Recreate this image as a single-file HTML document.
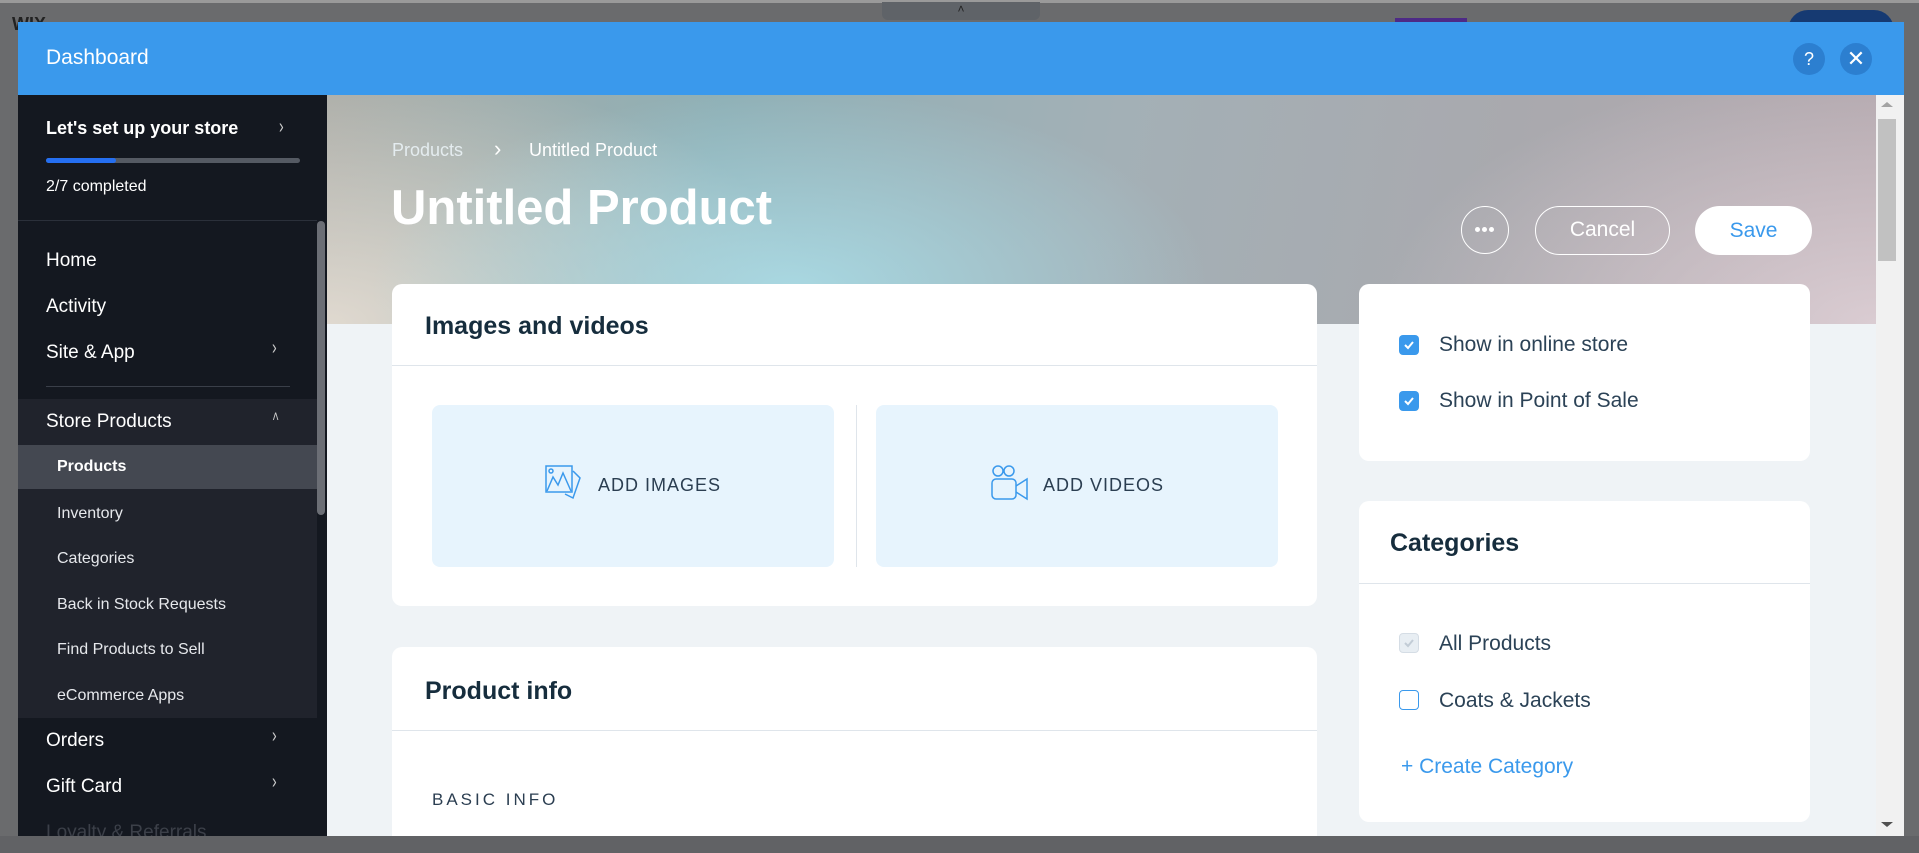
<!DOCTYPE html>
<html><head><meta charset="utf-8">
<style>
*{box-sizing:border-box;margin:0;padding:0}
html,body{width:1919px;height:853px;overflow:hidden}
body{background:#6a6b6d;font-family:"Liberation Sans",sans-serif;position:relative}
.abs{position:absolute}
.modal{left:18px;top:22px;width:1886px;height:814px;background:#eff3f6;overflow:hidden}
.hdr{left:0;top:0;width:1886px;height:73px;background:#3a99ec}
.hdr .t{left:28px;top:24px;color:#fff;font-size:21px}
.circ{width:32px;height:32px;border-radius:50%;background:#2c7fd0;color:#fff;text-align:center;line-height:32px;font-size:18px}
.side{left:0;top:73px;width:309px;height:741px;background:#141820;color:#fff;overflow:hidden}
.side .i{position:absolute;left:28px;font-size:19px;color:#fff}
.side .s{position:absolute;left:39px;font-size:16px;color:#e6e8ec}
.chev{position:absolute;left:253px;color:#ccc;font-size:20px;font-weight:100;transform:scaleX(.7)}
.hero{left:309px;top:73px;width:1549px;height:229px;background:
radial-gradient(ellipse 420px 200px at 30% 85%,rgba(170,218,228,.95),rgba(170,218,228,0)),
radial-gradient(ellipse 500px 260px at 0% 100%,rgba(230,222,212,.9),rgba(230,222,212,0)),
radial-gradient(ellipse 500px 260px at 100% 100%,rgba(222,208,214,.9),rgba(222,208,214,0)),
linear-gradient(100deg,#a9aba6 0%,#8fb0b6 25%,#a3b0b6 50%,#a9a9ae 75%,#b4a8ae 100%)}
.card{background:#fff;border-radius:10px;position:absolute}
.ht{position:absolute;font-size:25px;color:#162d3d;font-weight:bold}
.div{position:absolute;height:1px;background:#dfe5eb}
.box{position:absolute;background:#e7f4fd;border-radius:8px;color:#2b3e51;font-size:18px;letter-spacing:1px}
.cb{position:absolute;width:20px;height:20px;border-radius:4px;background:#3a99ec}
.lbl{position:absolute;font-size:21px;color:#2b4256}
</style></head><body>
<div class="abs" style="left:0;top:0;width:1919px;height:3px;background:#9a9a9a"></div>
<div class="abs" style="left:882px;top:2px;width:158px;height:18px;background:#5f6368;border-radius:0 0 6px 6px;color:#222;font-size:12px;text-align:center">˄</div>
<div class="abs" style="left:12px;top:14px;color:#222;font-size:18px;font-weight:bold">WIX</div>
<div class="abs" style="left:1395px;top:18px;width:72px;height:8px;background:#4d2a86"></div>
<div class="abs" style="left:1788px;top:10px;width:106px;height:20px;background:#163a72;border-radius:20px 20px 0 0"></div>
<div class="abs" style="left:0;top:836px;width:1919px;height:17px;background:#616265"></div>

<div class="abs modal">
  <div class="abs hdr"><div class="abs t">Dashboard</div>
    <div class="abs circ" style="left:1775px;top:21px">?</div>
    <div class="abs circ" style="left:1822px;top:21px;font-size:22px">✕</div>
  </div>

  <div class="abs side">
    <div class="i" style="top:23px;font-weight:bold;font-size:18px">Let's set up your store</div>
    <div class="chev" style="top:21px;left:260px">›</div>
    <div class="abs" style="left:28px;top:63px;width:254px;height:5px;background:#555a63;border-radius:3px"></div>
    <div class="abs" style="left:28px;top:63px;width:70px;height:5px;background:#256ff1;border-radius:3px"></div>
    <div class="i" style="top:83px;font-size:16px">2/7 completed</div>
    <div class="abs" style="left:0;top:125px;width:309px;height:1px;background:#2b303a"></div>
    <div class="i" style="top:155px">Home</div>
    <div class="i" style="top:201px">Activity</div>
    <div class="i" style="top:247px">Site &amp; App</div><div class="chev" style="top:242px">›</div>
    <div class="abs" style="left:28px;top:291px;width:244px;height:1px;background:#3a3f49"></div>
    <div class="abs" style="left:0;top:304px;width:299px;height:319px;background:#20232c"></div>
    <div class="i" style="top:316px">Store Products</div><div class="chev" style="top:314px;font-size:16px">˄</div>
    <div class="abs" style="left:0;top:350px;width:299px;height:44px;background:#444851"></div>
    <div class="s" style="top:363px;font-weight:bold;color:#fff">Products</div>
    <div class="s" style="top:410px">Inventory</div>
    <div class="s" style="top:455px">Categories</div>
    <div class="s" style="top:501px">Back in Stock Requests</div>
    <div class="s" style="top:546px">Find Products to Sell</div>
    <div class="s" style="top:592px">eCommerce Apps</div>
    <div class="i" style="top:635px">Orders</div><div class="chev" style="top:630px">›</div>
    <div class="i" style="top:681px">Gift Card</div><div class="chev" style="top:676px">›</div>
    <div class="i" style="top:727px;color:#3c4049">Loyalty &amp; Referrals</div>
    <div class="abs" style="left:299px;top:125px;width:10px;height:616px;background:#141820"></div>
    <div class="abs" style="left:299px;top:126px;width:8px;height:294px;background:#6b6e75;border-radius:4px"></div>
  </div>

  <div class="abs hero"></div>
  <div class="abs" style="left:374px;top:118px;color:#e4ecef;font-size:18px">Products</div>
  <div class="abs" style="left:476px;top:114px;color:#fff;font-size:22px">›</div>
  <div class="abs" style="left:511px;top:118px;color:#fff;font-size:18px">Untitled Product</div>
  <div class="abs" style="left:373px;top:158px;color:#fff;font-size:49px;font-weight:bold">Untitled Product</div>
  <div class="abs" style="left:1443px;top:184px;width:48px;height:48px;border:1.5px solid #fff;border-radius:50%">
    <div class="abs" style="left:13px;top:20px;width:5px;height:5px;border-radius:50%;background:#fff"></div>
    <div class="abs" style="left:20px;top:20px;width:5px;height:5px;border-radius:50%;background:#fff"></div>
    <div class="abs" style="left:27px;top:20px;width:5px;height:5px;border-radius:50%;background:#fff"></div>
  </div>
  <div class="abs" style="left:1517px;top:184px;width:135px;height:49px;border:1.5px solid #fff;border-radius:25px;color:#fff;text-align:center;line-height:46px;font-size:21px">Cancel</div>
  <div class="abs" style="left:1677px;top:184px;width:117px;height:49px;background:#fff;border-radius:25px;color:#3a99ec;text-align:center;line-height:49px;font-size:21px">Save</div>

  <div class="card" style="left:374px;top:262px;width:925px;height:322px">
    <div class="ht" style="left:33px;top:28px;font-weight:600">Images and videos</div>
    <div class="div" style="left:0;top:81px;width:925px"></div>
    <div class="box" style="left:40px;top:121px;width:402px;height:162px">
      <svg class="abs" style="left:113px;top:60px" width="38" height="36" viewBox="0 0 38 36" fill="none" stroke="#3a99ec" stroke-width="1.5"><rect x="1" y="1" width="26" height="26"/><circle cx="6" cy="6" r="2"/><path d="M2 26 L8 12 L13 20 L18 8 L26 26"/><path d="M28 6 L35 13 L28 33 L20 29"/></svg>
      <div class="abs" style="left:166px;top:70px">ADD IMAGES</div>
    </div>
    <div class="div" style="left:464px;top:121px;width:1px;height:162px"></div>
    <div class="box" style="left:484px;top:121px;width:402px;height:162px">
      <svg class="abs" style="left:115px;top:59px" width="38" height="38" viewBox="0 0 38 38" fill="none" stroke="#3a99ec" stroke-width="1.5"><circle cx="7" cy="7" r="5"/><circle cx="18" cy="7" r="5"/><rect x="1" y="15" width="24" height="20" rx="4"/><path d="M25 22 L36 15 L36 35 L25 28"/></svg>
      <div class="abs" style="left:167px;top:70px">ADD VIDEOS</div>
    </div>
  </div>

  <div class="card" style="left:374px;top:625px;width:925px;height:200px">
    <div class="ht" style="left:33px;top:30px;font-weight:600">Product info</div>
    <div class="div" style="left:0;top:83px;width:925px"></div>
    <div class="abs" style="left:40px;top:143px;color:#2b3e51;font-size:17px;letter-spacing:3px">BASIC INFO</div>
  </div>

  <div class="card" style="left:1341px;top:262px;width:451px;height:177px">
    <div class="cb" style="left:40px;top:51px"><svg width="20" height="20"><path d="M6 10 L9 13 L14 7" stroke="#fff" stroke-width="2" fill="none"/></svg></div>
    <div class="lbl" style="left:80px;top:49px">Show in online store</div>
    <div class="cb" style="left:40px;top:107px"><svg width="20" height="20"><path d="M6 10 L9 13 L14 7" stroke="#fff" stroke-width="2" fill="none"/></svg></div>
    <div class="lbl" style="left:80px;top:105px">Show in Point of Sale</div>
  </div>

  <div class="card" style="left:1341px;top:479px;width:451px;height:321px">
    <div class="ht" style="left:31px;top:28px">Categories</div>
    <div class="div" style="left:0;top:82px;width:451px"></div>
    <div class="cb" style="left:40px;top:132px;background:#e8eef3;border:1px solid #d5dde5"><svg width="18" height="18"><path d="M5 9 L8 12 L13 6" stroke="#c2ccd6" stroke-width="2" fill="none"/></svg></div>
    <div class="lbl" style="left:80px;top:131px">All Products</div>
    <div class="cb" style="left:40px;top:189px;background:#fff;border:1.5px solid #3a99ec"></div>
    <div class="lbl" style="left:80px;top:188px">Coats &amp; Jackets</div>
    <div class="lbl" style="left:42px;top:254px;color:#3a99ec">+ Create Category</div>
  </div>

  <div class="abs" style="left:1858px;top:73px;width:28px;height:741px;background:#f1f1f1"></div>
  <div class="abs" style="left:1860px;top:97px;width:18px;height:142px;background:#c1c1c1"></div>
  <div class="abs" style="left:1863px;top:80px;width:0;height:0;border-left:6px solid transparent;border-right:6px solid transparent;border-bottom:5px solid #a3a3a3"></div>
  <div class="abs" style="left:1863px;top:800px;width:0;height:0;border-left:6px solid transparent;border-right:6px solid transparent;border-top:5px solid #505050"></div>
</div>
</body></html>
